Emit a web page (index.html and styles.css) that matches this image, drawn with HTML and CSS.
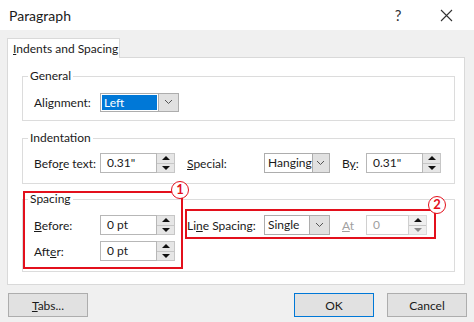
FILE: index.html
```html
<!DOCTYPE html>
<html lang="en">
<head>
    <meta charset="UTF-8">
    <meta name="viewport" content="width=device-width, initial-scale=1.0">
    <title>Paragraph</title>
    <link rel="stylesheet" href="styles.css">
</head>
<body>
    <div class="titlebar">
        <span class="title">Paragraph</span>
        <span class="help">?</span>
        <span class="close">
            <svg width="13" height="13" viewBox="0 0 13 13"><path d="M1 1 L12 12 M12 1 L1 12" stroke="#333" stroke-width="1.1" fill="none"/></svg>
        </span>
    </div>

    <div class="content">
        <div class="tabs">
            <div class="tab"><u>I</u>ndents and Spacing</div>
        </div>

        <div class="panel">
            <fieldset class="group general">
                <legend>General</legend>
                <div class="row">
                    <span class="lbl">Alignment:</span>
                    <div class="select sel-align">
                        <span class="value">Left</span>
                        <span class="arrow"><svg width="9" height="6" viewBox="0 0 9 6"><polyline points="1,1 4.5,4.5 8,1" stroke="#555" fill="none"/></svg></span>
                    </div>
                </div>
            </fieldset>

            <fieldset class="group indentation">
                <legend>Indentation</legend>
                <div class="row">
                    <span class="lbl">Befo<u>r</u>e text:</span>
                    <div class="spin">
                        <span class="spin-text">0.31"</span>
                        <span class="spin-btns"><span class="up"></span><span class="down"></span></span>
                    </div>
                    <span class="lbl mid"><u>S</u>pecial:</span>
                    <div class="select sel-short">
                        <span class="value">Hanging</span>
                        <span class="arrow"><svg width="9" height="6" viewBox="0 0 9 6"><polyline points="1,1 4.5,4.5 8,1" stroke="#555" fill="none"/></svg></span>
                    </div>
                    <span class="lbl short">B<u>y</u>:</span>
                    <div class="spin">
                        <span class="spin-text">0.31"</span>
                        <span class="spin-btns"><span class="up"></span><span class="down"></span></span>
                    </div>
                </div>
            </fieldset>

            <fieldset class="group spacing">
                <legend>Spacing</legend>
                <div class="row">
                    <span class="lbl"><u>B</u>efore:</span>
                    <div class="spin">
                        <span class="spin-text">0 pt</span>
                        <span class="spin-btns"><span class="up"></span><span class="down"></span></span>
                    </div>
                    <span class="lbl mid">Li<u>n</u>e Spacing:</span>
                    <div class="select sel-short">
                        <span class="value">Single</span>
                        <span class="arrow"><svg width="9" height="6" viewBox="0 0 9 6"><polyline points="1,1 4.5,4.5 8,1" stroke="#555" fill="none"/></svg></span>
                    </div>
                    <span class="lbl short disabled"><u>A</u>t</span>
                    <div class="spin spin-small disabled">
                        <span class="spin-text">0</span>
                        <span class="spin-btns"><span class="up"></span><span class="down"></span></span>
                    </div>
                </div>
                <div class="row second">
                    <span class="lbl">Aft<u>e</u>r:</span>
                    <div class="spin">
                        <span class="spin-text">0 pt</span>
                        <span class="spin-btns"><span class="up"></span><span class="down"></span></span>
                    </div>
                </div>
            </fieldset>
        </div>

        <div class="buttons">
            <button class="btn"><u>T</u>abs...</button>
            <button class="btn ok">OK</button>
            <button class="btn cancel">Cancel</button>
        </div>
    </div>

    <!-- annotations -->
    <div class="callout callout-1"></div>
    <div class="callout callout-2"></div>
    <div class="badge badge-1">1</div>
    <div class="badge badge-2">2</div>
</body>
</html>
```

FILE: styles.css
```css
body {
    margin: 0;
    width: 474px;
    height: 322px;
    overflow: hidden;
    position: relative;
    background: #f0f0f0;
    font-family: Lato, "Noto Sans", sans-serif;
    font-size: 12px;
    color: #1a1a1a;
}

u {
    text-underline-offset: 1px;
}

.titlebar {
    height: 30px;
    background: #fff;
    display: flex;
    align-items: center;
    padding: 0 21px 0 9px;
}

.title {
    flex: 1;
    font-size: 14px;
}

.help {
    width: 8px;
    text-align: center;
    font-size: 15px;
    color: #333;
    margin-right: 38px;
}

.close {
    display: flex;
}

.content {
    padding: 8px 0 0 7px;
}

.tabs {
    display: flex;
}

.tab {
    position: relative;
    width: 113px;
    height: 20px;
    box-sizing: border-box;
    background: #fff;
    border: 1px solid #d9d9d9;
    border-bottom: none;
    padding-left: 5px;
    line-height: 19px;
    margin-bottom: -1px;
}

.panel {
    width: 458px;
    height: 228px;
    box-sizing: border-box;
    background: #fff;
    border: 1px solid #d9d9d9;
    padding: 10px 0 0 14px;
}

.group {
    width: 433px;
    box-sizing: border-box;
    margin: 0;
    min-width: 0;
    border: 1px solid #dcdcdc;
    padding: 8px 10px 8px 11px;
}

.group legend {
    margin-left: -6px;
    padding: 0 2px;
    line-height: 16px;
}

.indentation {
    margin-top: 9px;
    padding-top: 7px;
    padding-bottom: 10px;
}

.spacing {
    margin-top: 7px;
    padding-bottom: 10px;
}

.row {
    display: flex;
    align-items: center;
    height: 20px;
}

.row.second {
    margin-top: 6px;
}

.lbl {
    width: 66px;
    flex-shrink: 0;
}

.lbl.mid {
    width: 77px;
    margin-left: 12px;
}

.lbl.short {
    width: 24px;
    margin-left: 12px;
}

.lbl.disabled {
    color: #a0a0a0;
}

.select {
    display: flex;
    height: 20px;
    box-sizing: border-box;
    border: 1px solid #adadad;
    background: #fff;
}

.select .value {
    flex: 1;
    padding-left: 3px;
    line-height: 18px;
}

.select .arrow {
    width: 19px;
    background: #e1e1e1;
    border-left: 1px solid #adadad;
    display: flex;
    align-items: center;
    justify-content: center;
}

.sel-align {
    width: 79px;
    height: 19px;
}

.sel-align .value {
    background: #0078d7;
    color: #fff;
    margin: 1px;
    line-height: 15px;
    padding-left: 2px;
}

.sel-short {
    width: 66px;
}

.spin {
    display: flex;
    height: 20px;
}

.spin-text {
    width: 57px;
    box-sizing: border-box;
    border: 1px solid #b7b7b7;
    padding-left: 6px;
    line-height: 18px;
    background: #fff;
}

.spin-btns {
    width: 18px;
    display: flex;
    flex-direction: column;
    box-sizing: border-box;
    border: 1px solid #c6c6c6;
    border-left: none;
}

.spin-btns span {
    flex: 1;
    background: #e6e6e6;
    display: flex;
    align-items: center;
    justify-content: center;
}

.spin-btns .up {
    border-bottom: 1px solid #c6c6c6;
}

.spin-btns .up::after {
    content: "";
    border-left: 4px solid transparent;
    border-right: 4px solid transparent;
    border-bottom: 4px solid #111;
}

.spin-btns .down::after {
    content: "";
    border-left: 4px solid transparent;
    border-right: 4px solid transparent;
    border-top: 4px solid #111;
}

.spin-small .spin-text {
    width: 43px;
}

.spin.disabled .spin-text {
    color: #a0a0a0;
    border-color: #d0d0d0;
}

.spin.disabled .spin-btns {
    border-color: #dadada;
}

.spin.disabled .spin-btns span {
    background: #efefef;
}

.spin.disabled .down::after {
    border-top-color: #8a8a8a;
}

.buttons {
    display: flex;
    width: 460px;
    margin-top: 8px;
    padding-left: 1px;
    box-sizing: border-box;
}

.btn {
    width: 80px;
    height: 24px;
    padding: 0;
    font: inherit;
    color: #1a1a1a;
    background: #e1e1e1;
    border: 1px solid #adadad;
}

.btn.ok {
    margin-left: auto;
    border-color: #0078d7;
}

.btn.cancel {
    margin-left: 13px;
}

.callout {
    position: absolute;
    box-sizing: border-box;
    border: 2px solid #e3101c;
}

.callout-1 {
    left: 23px;
    top: 191px;
    width: 160px;
    height: 78px;
}

.callout-2 {
    left: 185px;
    top: 209px;
    width: 251px;
    height: 30px;
}

.badge {
    position: absolute;
    width: 18px;
    height: 18px;
    box-sizing: border-box;
    border: 1.5px solid #e3101c;
    border-radius: 50%;
    background: #fff;
    color: #e3101c;
    font-weight: bold;
    font-size: 13px;
    line-height: 15px;
    text-align: center;
}

.badge-1 {
    left: 171px;
    top: 181px;
}

.badge-2 {
    left: 428px;
    top: 196px;
}
```
